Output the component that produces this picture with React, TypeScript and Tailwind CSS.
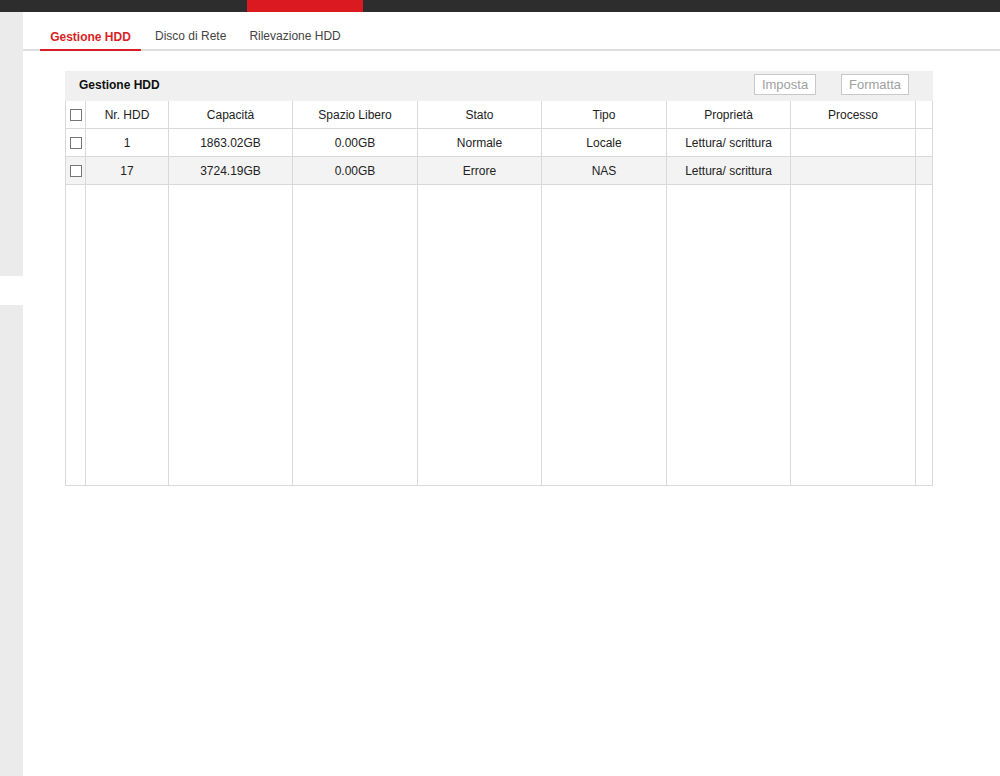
import React from "react";

// ── データ ──────────────────────────────────────────────────────────────────

type HddRow = {
  nr: string;
  capacity: string;
  free: string;
  status: string;
  type: string;
  prop: string;
  process: string;
};

const ROWS: HddRow[] = [
  { nr: "1", capacity: "1863.02GB", free: "0.00GB", status: "Normale", type: "Locale", prop: "Lettura/ scrittura", process: "" },
  { nr: "17", capacity: "3724.19GB", free: "0.00GB", status: "Errore", type: "NAS", prop: "Lettura/ scrittura", process: "" },
];

const HEADERS = ["Nr. HDD", "Capacità", "Spazio Libero", "Stato", "Tipo", "Proprietà", "Processo"];

const GRID = "grid grid-cols-[20px_83px_124px_125px_124px_125px_124px_125px_1fr]";

function Box() {
  return <span className="block h-[12px] w-[12px] border border-[#767676] bg-white" />;
}

function Cell({ children, last }: { children?: React.ReactNode; last?: boolean }) {
  return (
    <div
      className={`flex items-center justify-center ${last ? "" : "border-r"} border-[#d9d9d9] text-[12px] text-[#222]`}
    >
      {children}
    </div>
  );
}

function Row({ cells, bg, check = true }: { cells: string[]; bg: string; check?: boolean }) {
  return (
    <div className={`${GRID} h-[28px] border-b border-[#d9d9d9] ${bg}`}>
      <Cell>{check && <Box />}</Cell>
      {cells.map((c, i) => (
        <Cell key={i}>{c}</Cell>
      ))}
      <Cell last />
    </div>
  );
}

export default function App() {
  return (
    <div
      className="flex h-[776px] w-[1000px] flex-col overflow-hidden bg-white"
      style={{ fontFamily: '"Liberation Sans", Arial, sans-serif' }}
    >
      {/* トップバー */}
      <div className="flex h-[12px] shrink-0 bg-[#2d2d2d]">
        <div className="ml-[247px] h-full w-[116px] bg-[#da1a20]" />
      </div>

      <div className="flex flex-1">
        {/* サイドバー */}
        <div className="flex w-[23px] shrink-0 flex-col">
          <div className="h-[264px] bg-[#ebebeb]" />
          <div className="h-[29px] bg-white" />
          <div className="flex-1 bg-[#ebebeb]" />
        </div>

        {/* メイン */}
        <div className="flex flex-1 flex-col">
          <div className="flex h-[39px] items-end border-b-2 border-[#dedede] pl-[17px]">
            <div className="-mb-[2px] flex h-[39px] w-[101px] items-center justify-center border-b-2 border-[#d81f26] pt-[12px] text-[12px] font-bold text-[#d81f26]">
              Gestione HDD
            </div>
            <div className="flex h-[39px] items-center pl-[14px] pt-[12px] text-[12px] text-[#444]">Disco di Rete</div>
            <div className="flex h-[39px] items-center pl-[23px] pt-[12px] text-[12px] text-[#444]">Rilevazione HDD</div>
          </div>

          {/* パネル */}
          <div className="ml-[42px] mt-[20px] w-[868px]">
            <div className="flex h-[30px] items-center justify-between bg-[#f0f0f0] pb-[2px] pl-[14px] pr-[24px]">
              <span className="text-[12px] font-bold text-[#111]">Gestione HDD</span>
              <div className="mb-[1px] flex gap-[25px]">
                <button className="h-[21px] w-[62px] border border-[#c8c8c8] bg-white text-[13px] text-[#a0a0a0]">
                  Imposta
                </button>
                <button className="h-[21px] w-[68px] border border-[#c8c8c8] bg-white text-[13px] text-[#a0a0a0]">
                  Formatta
                </button>
              </div>
            </div>

            <div className="border-x border-[#d9d9d9]">
              <Row cells={HEADERS} bg="bg-white" />
              {ROWS.map((r, i) => (
                <Row
                  key={r.nr}
                  cells={[r.nr, r.capacity, r.free, r.status, r.type, r.prop, r.process]}
                  bg={i % 2 === 1 ? "bg-[#f3f3f3]" : "bg-white"}
                />
              ))}
              <div className={`${GRID} h-[301px] border-b border-[#d9d9d9]`}>
                {Array.from({ length: 8 }).map((_, i) => (
                  <Cell key={i} />
                ))}
                <Cell last />
              </div>
            </div>
          </div>
        </div>
      </div>
    </div>
  );
}
